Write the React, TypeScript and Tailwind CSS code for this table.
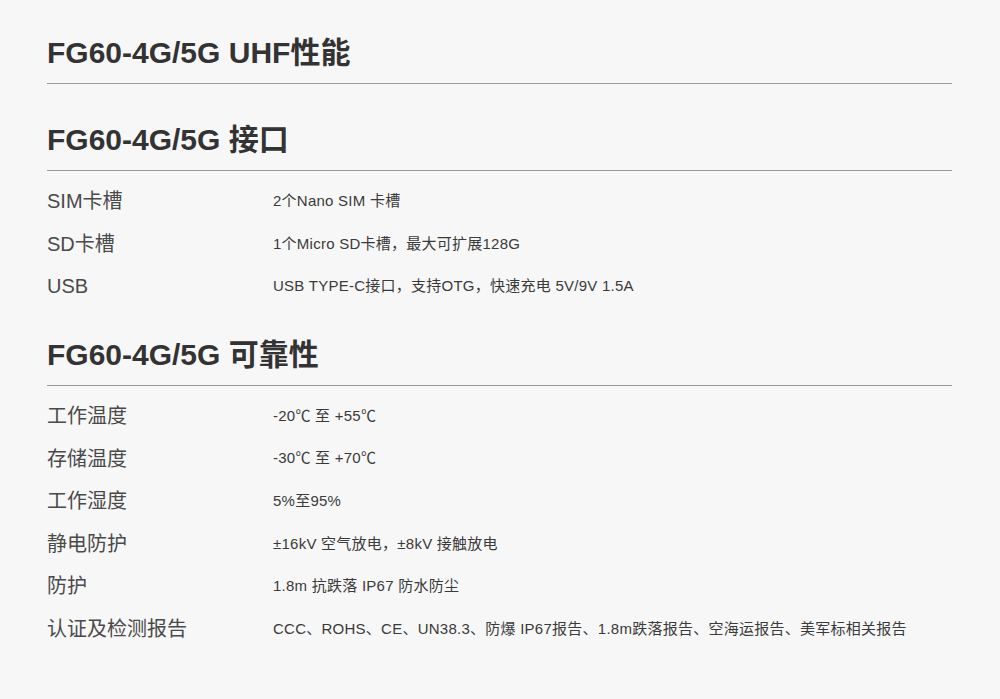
const sections: { title: string; rows: [string, string][] }[] = [
  { title: 'FG60-4G/5G UHF性能', rows: [] },
  {
    title: 'FG60-4G/5G 接口',
    rows: [
      ['SIM卡槽', '2个Nano SIM 卡槽'],
      ['SD卡槽', '1个Micro SD卡槽，最大可扩展128G'],
      ['USB', 'USB TYPE-C接口，支持OTG，快速充电 5V/9V 1.5A'],
    ],
  },
  {
    title: 'FG60-4G/5G 可靠性',
    rows: [
      ['工作温度', '-20℃ 至 +55℃'],
      ['存储温度', '-30℃ 至 +70℃'],
      ['工作湿度', '5%至95%'],
      ['静电防护', '±16kV 空气放电，±8kV 接触放电'],
      ['防护', '1.8m 抗跌落 IP67 防水防尘'],
      ['认证及检测报告', 'CCC、ROHS、CE、UN38.3、防爆 IP67报告、1.8m跌落报告、空海运报告、美军标相关报告'],
    ],
  },
];

export default function App() {
  return (
    <div
      className="min-h-[699px] w-full bg-[#f7f7f7] pl-[47px] pr-[48px] pt-[33px]"
      style={{ fontFamily: '"Liberation Sans", Arial, "Noto Sans CJK SC", sans-serif' }}
    >
      {sections.map((s, i) => (
        <section key={s.title} className={i === 0 ? '' : i === 1 ? 'mt-[36px]' : 'mt-[27px]'}>
          <h2 className="border-b border-[#9a9a9a] pb-[10px] text-[30px] font-bold leading-[40px] text-[#333]">
            {s.title}
          </h2>
          {s.rows.length > 0 && (
            <div className="pt-[9px]">
              {s.rows.map(([label, value]) => (
                <div key={label} className="flex h-[42.6px] items-center">
                  <div className="w-[226px] shrink-0 text-[20px] text-[#4a4a4a]">{label}</div>
                  <div className="text-[15px] tracking-[0.25px] text-[#3a3a3a]">{value}</div>
                </div>
              ))}
            </div>
          )}
        </section>
      ))}
    </div>
  );
}
